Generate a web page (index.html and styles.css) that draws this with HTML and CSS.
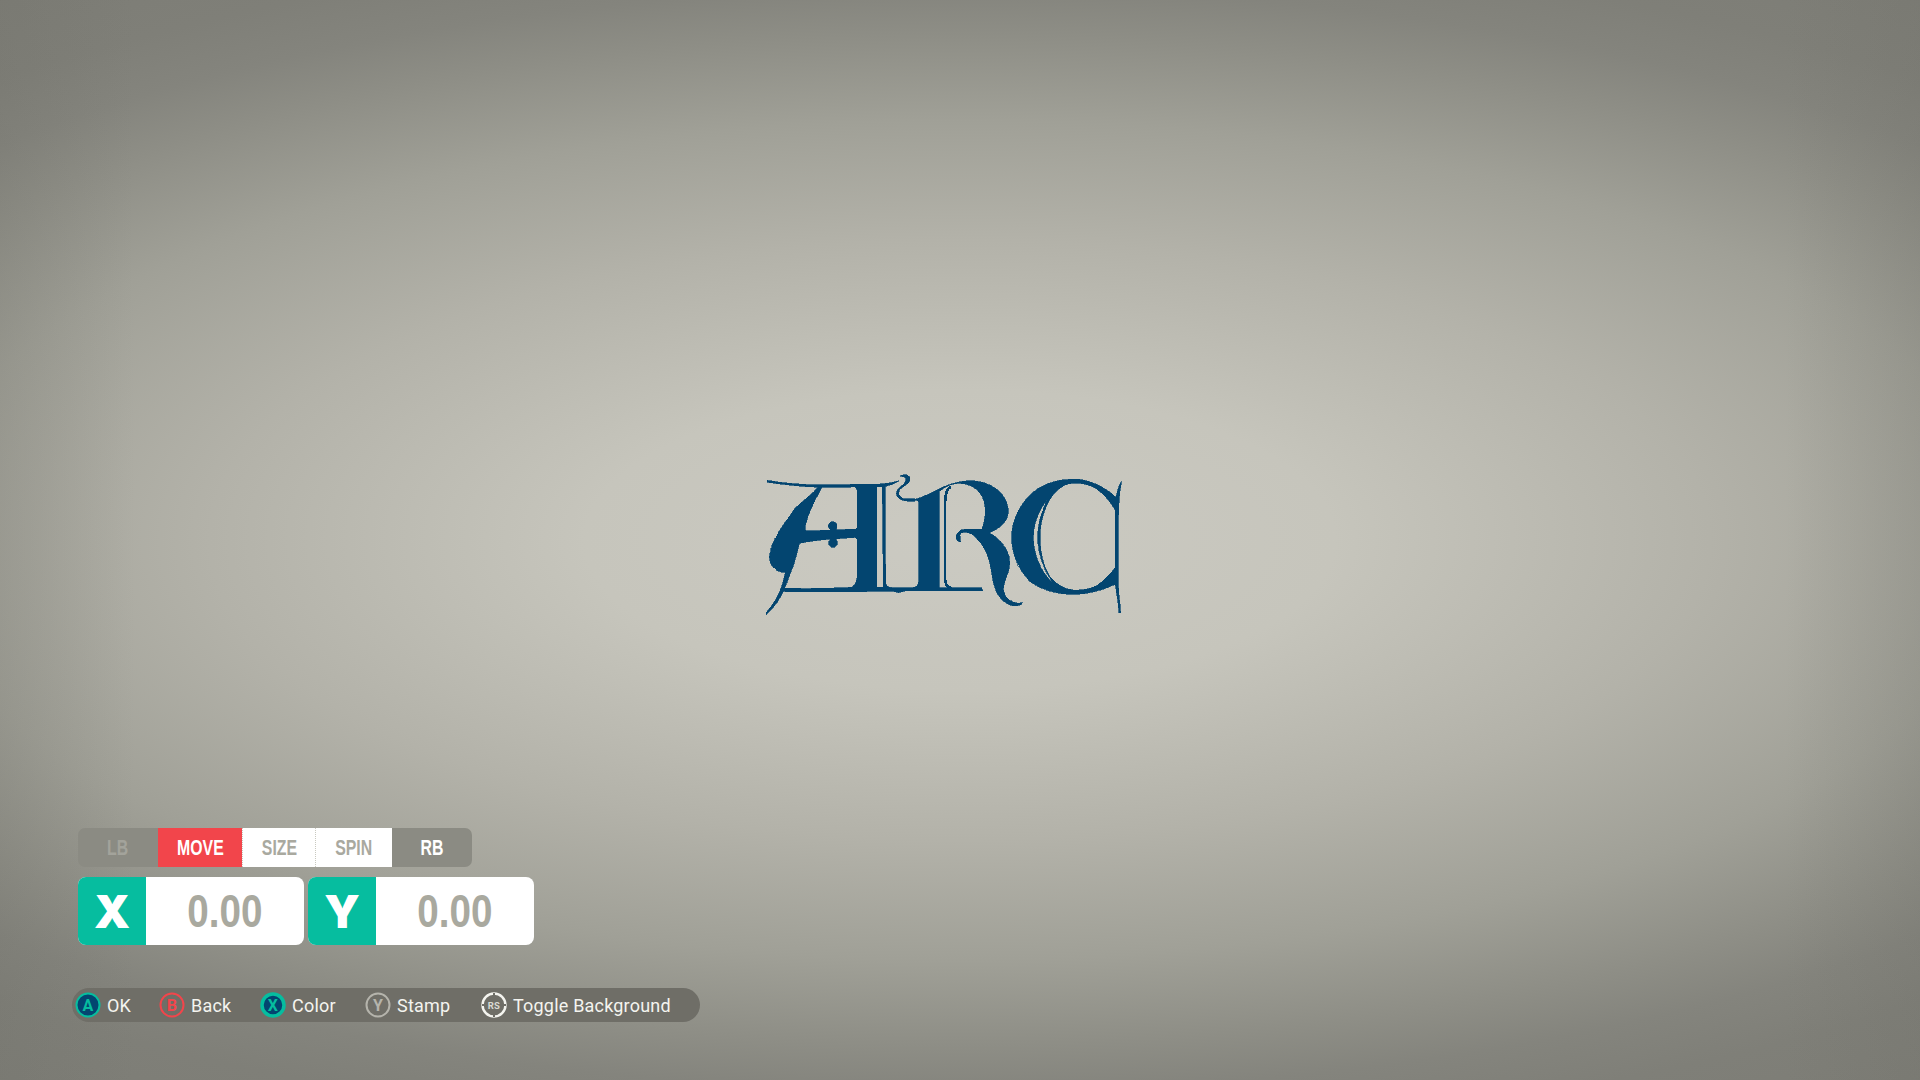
FILE: index.html
```html
<!DOCTYPE html>
<html lang="en">
<head>
<meta charset="utf-8">
<title>Vinyl editor</title>
<link rel="stylesheet" href="styles.css">
</head>
<body>
<main class="stage">
  <svg class="logo" viewBox="0 0 1200 570" role="img" aria-label="ARC logo">
    <g class="logo-fill">
      <path d="M82,91 C130,100 190,104 240,105 L420,102 C445,100 462,97 478,92 C465,101 450,107 432,110 L240,112 C180,110 120,102 82,97 Z"/>
      <path d="M236,110 L246,112 C225,150 203,190 195,232 C194,240 198,243 205,243 L350,237 L350,262 C300,266 230,268 178,280 C170,315 162,345 153,365 L137,368 C105,368 88,345 88,320 C92,270 130,225 165,175 C190,150 215,135 236,110 Z"/>
      <circle cx="278" cy="228" r="13"/>
      <circle cx="279" cy="279" r="13"/>
      <path d="M270,225 H288 V280 H270 Z"/>
      <path d="M338,108 L410,108 L410,413 L332,413 C345,408 352,395 352,370 L352,270 C352,268 350,264 345,263 L345,238 C350,236 352,235 352,225 L352,128 C352,115 348,110 338,108 Z"/>
      <path d="M427,108 L435,108 L437,413 L430,413 Z"/>
      <path d="M437,395 C438,405 442,412 455,414 L437,416 Z"/>
      <path d="M137,366 L153,364 C146,385 140,402 132,418 C120,450 100,475 78,494 L78,488 C100,465 120,430 128,400 Z"/>
      <path d="M130,414 C200,418 280,414 340,412 L725,414 L728,422 L500,422 L475,428 L460,424 L150,426 L130,424 Z"/>
      <path d="M536,152 L597,125 L597,413 L520,413 C530,411 536,405 536,392 Z"/>
      <path d="M525,148 C570,138 610,96 690,92 C750,92 805,130 805,185 C805,215 775,240 742,250 L725,240 C735,215 737,190 735,170 C730,125 700,103 660,100 C640,100 630,105 615,112 L597,125 L536,155 Z"/>
      <path d="M675,238 L725,238 C745,245 780,262 800,300 C810,320 812,340 805,365 C798,385 790,405 790,420 C795,445 815,465 848,458 C842,470 815,472 800,460 C775,445 762,420 755,370 C750,330 740,290 700,255 C690,248 675,243 662,250 C657,256 662,268 662,275 C650,278 645,262 652,250 C657,242 665,238 675,238 Z"/>
      <path fill-rule="evenodd" d="M1000,87 C945,88 900,105 870,135 C835,170 815,215 815,262 C815,310 832,355 870,395 C905,420 950,433 1000,433 C1045,433 1090,420 1128,402 L1128,350 C1105,380 1075,410 1050,415 C1030,420 1015,421 1000,420 C975,418 950,405 930,380 C910,350 900,305 900,262 C900,220 912,175 935,140 C950,120 970,102 995,100 C1025,97 1050,105 1070,117 C1095,135 1115,160 1128,185 L1128,142 C1100,115 1050,87 1000,87 Z M922,148 C897,180 880,220 880,262 C880,315 905,370 937,397 C917,365 893,320 893,262 C893,220 905,185 922,148 Z"/>
      <path d="M1143,95 C1136,110 1128,130 1126,160 L1126,405 C1130,430 1135,460 1137,488 L1142,488 C1140,450 1135,430 1135,400 L1135,240 C1135,180 1137,130 1145,95 Z"/>
      <path d="M480,78 C495,70 512,75 510,90 C508,102 490,108 480,118 C473,127 475,140 490,146 L525,147 L525,153 C495,156 470,150 469,130 C470,112 497,105 498,90 C498,82 490,80 480,78 Z"/>
    </g>
    <path class="logo-line" d="M630,112 C618,118 615,140 615,170 L615,385 C615,400 620,410 632,414"/>
  </svg>

  <section class="controls">
    <div class="tabs">
      <span class="tab tab-dim"><span class="narrow">LB</span></span>
      <span class="tab tab-active"><span class="narrow">MOVE</span></span>
      <span class="tab tab-plain tab-size"><span class="narrow">SIZE</span></span>
      <span class="tab tab-plain tab-spin"><span class="narrow">SPIN</span></span>
      <span class="tab tab-bumper"><span class="narrow">RB</span></span>
    </div>
    <div class="fields">
      <div class="field"><span class="axis">X</span><span class="value"><span class="value-text">0.00</span></span></div>
      <div class="field"><span class="axis">Y</span><span class="value"><span class="value-text">0.00</span></span></div>
    </div>
  </section>

  <nav class="hints">
    <span class="hint hint-ok">
      <svg class="btn" viewBox="0 0 26 26"><circle class="ring-teal fill-navy" cx="13" cy="13" r="11.5"/><text class="btn-letter letter-teal" x="13" y="18.5">A</text></svg>
      <span class="hint-label">OK</span>
    </span>
    <span class="hint hint-back">
      <svg class="btn" viewBox="0 0 26 26"><circle class="ring-red" cx="13" cy="13" r="11.5"/><text class="btn-letter letter-red" x="13" y="18.5">B</text></svg>
      <span class="hint-label">Back</span>
    </span>
    <span class="hint hint-color">
      <svg class="btn" viewBox="0 0 26 26"><circle class="ring-teal-thick fill-navy" cx="13" cy="13" r="11"/><text class="btn-letter letter-teal" x="13" y="18.5">X</text></svg>
      <span class="hint-label">Color</span>
    </span>
    <span class="hint hint-stamp">
      <svg class="btn" viewBox="0 0 26 26"><circle class="ring-grey" cx="13" cy="13" r="11.5"/><text class="btn-letter letter-grey" x="13" y="18.5">Y</text></svg>
      <span class="hint-label">Stamp</span>
    </span>
    <span class="hint">
      <svg class="btn" viewBox="0 0 26 26"><circle class="ring-white" cx="13" cy="13" r="11.5"/><path class="ticks" d="M13,1 V4 M13,22 V25 M1,13 H4 M22,13 H25"/><text class="btn-small" x="13" y="16.5">RS</text></svg>
      <span class="hint-label">Toggle Background</span>
    </span>
  </nav>
</main>
</body>
</html>
```
FILE: styles.css
```css
* { box-sizing: border-box; }
html, body { margin: 0; height: 100%; }
body { overflow: hidden; }

.stage {
  position: relative;
  width: 1920px;
  height: 1080px;
  padding: 0 0 58px 72px;
  display: flex;
  flex-direction: column;
  justify-content: flex-end;
  background:
    linear-gradient(90deg, rgba(110,110,103,.22), rgba(110,110,103,0) 7%, rgba(110,110,103,0) 93%, rgba(110,110,103,.22)),
    radial-gradient(ellipse 1500px 600px at 960px 540px, #cbcac2 0%, #c6c5bc 25%, #b3b2a9 50%, #a0a097 70%, #8e8e86 84%, #84847d 92%, #7f7f78 100%, #7b7b74 120%);
}

.logo { position: absolute; left: 740px; top: 450px; width: 400px; height: 190px; shape-rendering: crispEdges; }
.logo-fill { fill: #034570; stroke: #034570; stroke-width: 2; }
.logo-line { fill: none; stroke: #034570; stroke-width: 8; stroke-linecap: round; }

.controls { margin-left: 6px; display: flex; flex-direction: column; gap: 10px; }

.tabs {
  display: flex;
  width: 394px;
  height: 39px;
  border-radius: 7px;
  overflow: hidden;
  background: #8b8b83;
  font: 700 22px/39px "Liberation Sans", sans-serif;
}
.tab { display: block; text-align: center; }
.narrow { display: inline-block; transform: scaleX(.72); }
.tab-dim { width: 80px; color: #a3a39b; }
.tab-active { width: 84px; background: #f2454b; color: #fff; }
.tab-plain { background: #fff; color: #a9a99f; }
.tab-size { width: 73px; border-left: 1px dotted #c9c9c0; }
.tab-spin { width: 77px; border-left: 1px dotted #c9c9c0; }
.tab-bumper { width: 80px; color: #fff; }

.fields { display: flex; gap: 4px; }
.field {
  display: flex;
  width: 226px;
  height: 68px;
  border-radius: 8px;
  overflow: hidden;
  background: #fff;
}
.axis {
  width: 68px;
  background: #06bd9f;
  color: #fff;
  text-align: center;
  font: 900 46px/68px Inter, "Liberation Sans", sans-serif;
}
.value {
  flex: 1;
  text-align: center;
  color: #a9a99f;
  font: 700 46px/68px "Liberation Sans", sans-serif;
}
.value-text { display: inline-block; transform: scaleX(.84); }

.hints {
  margin-top: 43px;
  display: flex;
  align-items: center;
  width: 628px;
  height: 34px;
  padding-left: 3px;
  border-radius: 17px;
  background: #6f6e67;
  color: #f4f4ef;
  font: 400 18px/34px Roboto, sans-serif;
  letter-spacing: .2px;
}
.hint { display: flex; align-items: center; gap: 6px; }
.hint-label { padding-top: 1px; }
.hint-ok { width: 84px; }
.hint-back { width: 101px; }
.hint-color { width: 105px; }
.hint-stamp { width: 116px; }

.btn { width: 26px; height: 26px; flex: none; }
.ring-teal { stroke: #06bd9f; stroke-width: 2; }
.ring-teal-thick { stroke: #06bd9f; stroke-width: 3.5; }
.fill-navy { fill: #034570; }
.ring-red { fill: none; stroke: #f2454b; stroke-width: 2; }
.ring-grey { fill: none; stroke: #b5b4ac; stroke-width: 2; }
.ring-white { fill: none; stroke: #f4f4ef; stroke-width: 2.4; }
.ticks { stroke: #6f6e67; stroke-width: 2; }
.btn-letter { font: 700 16px Roboto, sans-serif; text-anchor: middle; }
.btn-small { font: 700 9.5px Roboto, sans-serif; text-anchor: middle; fill: #d9d9d2; }
.letter-teal { fill: #06bd9f; }
.letter-red { fill: #f2454b; }
.letter-grey { fill: #b5b4ac; }
```
